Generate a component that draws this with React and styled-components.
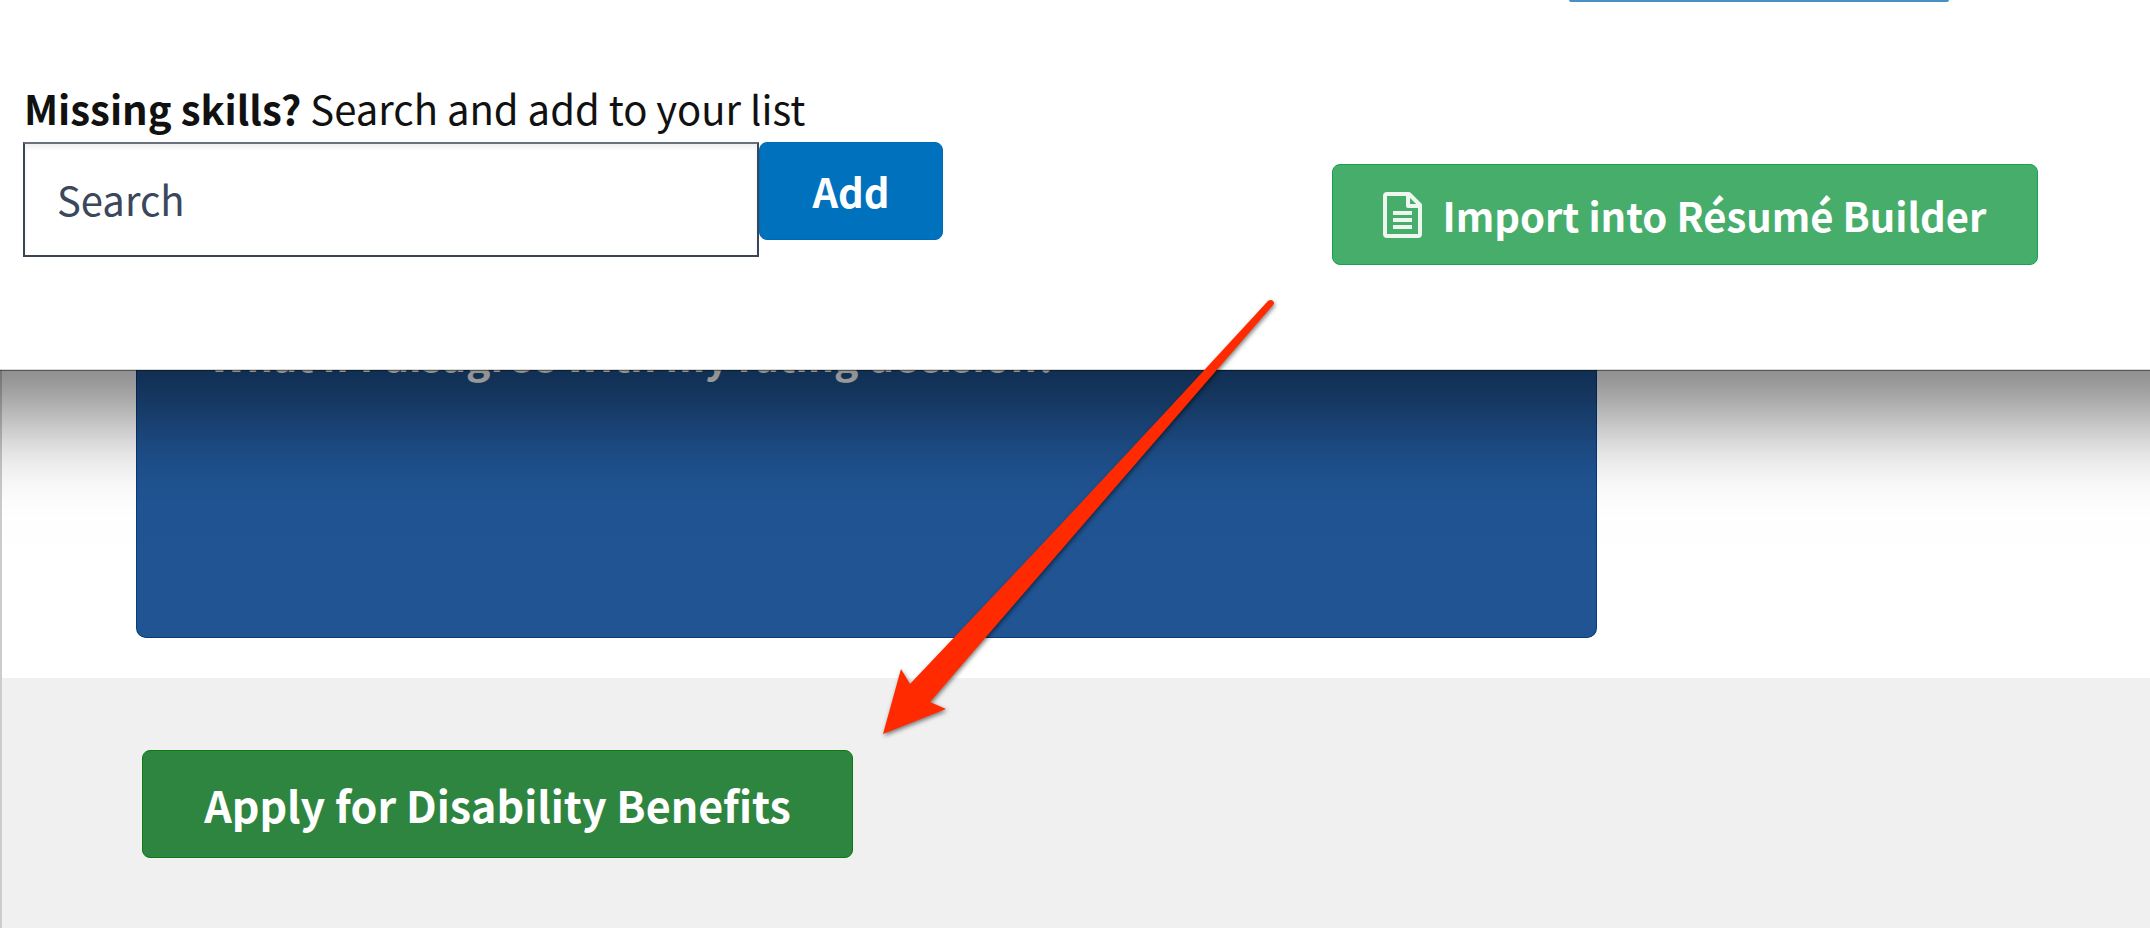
import React from "react";
import styled, { createGlobalStyle } from "styled-components";

const GlobalStyle = createGlobalStyle`
  *, *::before, *::after { box-sizing: border-box; }
  body {
    margin: 0;
    background: #fff;
    color: #111;
    font-family: "Noto Sans CJK SC", "Noto Sans", sans-serif;
  }
`;

const Page = styled.div`
  position: relative;
  min-height: 100vh;
  display: flex;
  flex-direction: column;
  overflow: hidden;
`;

const SkillsPanel = styled.section`
  position: relative;
  z-index: 1;
  display: flex;
  justify-content: space-between;
  align-items: flex-start;
  padding: 0 112px 104px 23px;
  background: #fff;
  border-bottom: 1px solid #d5dad3;
  box-shadow: 0 1px 0 rgba(0, 0, 0, 0.4), 0 -52px 84px 100px rgba(0, 0, 0, 0.5);
`;

const SkillSearch = styled.form`
  padding-top: 78px;
`;

const SearchLabel = styled.label`
  display: block;
  margin-bottom: 4px;
  padding-left: 1px;
  font-size: 40px;
  line-height: 60px;
  white-space: nowrap;
`;

const SearchRow = styled.div`
  display: flex;
  align-items: flex-start;
`;

const SearchInput = styled.input`
  width: 736px;
  height: 115px;
  padding: 0 32px 2px;
  border: 2px solid #3a4558;
  border-top-color: #6b717c;
  border-radius: 0;
  background: #fff;
  box-shadow: inset 0 4px 4px rgba(0, 0, 0, 0.06);
  color: #323f55;
  font: inherit;
  font-size: 40px;

  &::placeholder {
    color: #3a475c;
    opacity: 1;
  }
`;

const tones = {
  blue: { fill: "#0071bc", edge: "#0068b8" },
  mint: { fill: "#46ad6b", edge: "#12a453" },
  green: { fill: "#2e8540", edge: "#0b7a12" },
};

const Button = styled.button`
  display: inline-flex;
  align-items: center;
  justify-content: center;
  gap: 20px;
  width: ${(p) => p.$width}px;
  height: ${(p) => p.$height}px;
  padding: 0;
  border: 1px solid ${(p) => tones[p.$tone].edge};
  border-radius: 8px;
  background: ${(p) => tones[p.$tone].fill};
  color: #fff;
  font: inherit;
  font-size: ${(p) => p.$size || 40}px;
  font-weight: 700;
  line-height: 60px;
  white-space: nowrap;
`;

const Actions = styled.div`
  display: flex;
  flex-direction: column;
  gap: 162px;
`;

const OutlineEdge = styled.div`
  width: 380px;
  height: 2px;
  margin-left: 237px;
  border-bottom: 2px solid #4690c4;
  border-radius: 0 0 8px 8px;
`;

const Benefits = styled.main`
  flex: 1;
  display: flex;
  flex-direction: column;
  border-left: 2px solid #ccc;
`;

const CardArea = styled.section`
  padding-bottom: 40px;
`;

const InfoCard = styled.article`
  display: flow-root;
  width: 68%;
  height: 268px;
  margin-left: 134px;
  border: 1px solid #053a84;
  border-top: 0;
  border-radius: 0 0 10px 10px;
  background: #205493;
`;

const CardHeading = styled.h2`
  margin: -46px 0 0;
  padding-left: 72px;
  color: #fff;
  font-size: 41px;
  font-weight: 700;
  line-height: 60px;
  white-space: nowrap;
`;

const ApplyArea = styled.section`
  flex: 1;
  padding: 72px 140px 70px;
  background: #f0f0f0;
`;

const ArrowLayer = styled.svg`
  position: absolute;
  z-index: 2;
  left: 870px;
  top: 290px;
  width: 420px;
  height: 460px;
  overflow: visible;
  pointer-events: none;
  filter: drop-shadow(1px 2px 2px rgba(0, 0, 0, 0.5));
`;

const DocumentIcon = () => (
  <svg width="39" height="46" viewBox="0 0 39 46" fill="none" stroke="#fff" strokeOpacity="0.9" strokeWidth="4" aria-hidden="true">
    <path
      d="M4 2H26L37 13V42Q37 44 35 44H4Q2 44 2 42V4Q2 2 4 2ZM25 2V14H37M10 21H29M10 28H29M10 35H29"
      strokeLinejoin="round"
    />
  </svg>
);

export default function App() {
  return (
    <>
      <GlobalStyle />
      <Page>
        <SkillsPanel>
          <SkillSearch onSubmit={(e) => e.preventDefault()}>
            <SearchLabel htmlFor="skill-search">
              <strong>Missing skills?</strong> Search and add to your list
            </SearchLabel>
            <SearchRow>
              <SearchInput id="skill-search" type="text" placeholder="Search" />
              <Button type="submit" $tone="blue" $width={184} $height={98}>Add</Button>
            </SearchRow>
          </SkillSearch>
          <Actions>
            <OutlineEdge />
            <Button type="button" $tone="mint" $width={706} $height={101}>
              <DocumentIcon />
              Import into Résumé Builder
            </Button>
          </Actions>
        </SkillsPanel>
        <Benefits>
          <CardArea>
            <InfoCard>
              <CardHeading>What if I disagree with my rating decision?</CardHeading>
            </InfoCard>
          </CardArea>
          <ApplyArea>
            <Button type="button" $tone="green" $width={711} $height={108} $size={43}>
              Apply for Disability Benefits
            </Button>
          </ApplyArea>
        </Benefits>
        <ArrowLayer viewBox="0 0 420 460" aria-hidden="true">
          <path
            d="M13 444L31 379L40 394Q220 205 398 11Q401 9 403 11Q405 13 403 15Q236 208 60 412L76 419Z"
            fill="#ff2a00"
          />
        </ArrowLayer>
      </Page>
    </>
  );
}
